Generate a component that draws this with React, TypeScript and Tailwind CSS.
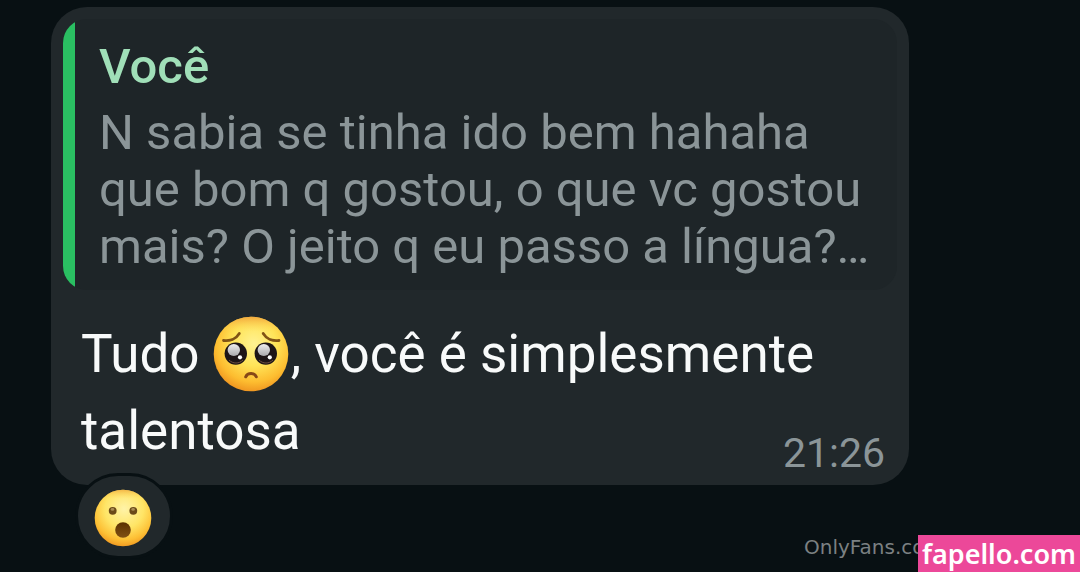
import React from 'react';

const QUOTE = {
  author: 'Você',
  text: 'N sabia se tinha ido bem hahaha que bom q gostou, o que vc gostou mais? O jeito q eu passo a língua?…',
};

const PleadingFace: React.FC = () => (
  <svg viewBox="0 0 80 80" role="img" aria-label="Rosto implorando" className="inline-block w-20 h-20 -mt-3 -mb-1 -ml-0.5 align-middle">
    <defs>
      <radialGradient id="plead-skin" cx="54%" cy="36%" r="66%">
        <stop offset="0" stopColor="#fff292" />
        <stop offset="0.45" stopColor="#ffe458" />
        <stop offset="0.78" stopColor="#fdbd30" />
        <stop offset="1" stopColor="#ee921f" />
      </radialGradient>
      <linearGradient id="plead-top" x1="0" y1="0" x2="0" y2="1">
        <stop offset="0" stopColor="#f0a03c" stopOpacity="0.85" />
        <stop offset="0.2" stopColor="#ffd55a" stopOpacity="0" />
      </linearGradient>
      <linearGradient id="plead-shine" x1="0" y1="0" x2="0" y2="1">
        <stop offset="0" stopColor="#eeeeee" />
        <stop offset="1" stopColor="#aaa9ad" />
      </linearGradient>
    </defs>
    <circle cx="40" cy="40" r="37.3" fill="url(#plead-skin)" />
    <circle cx="40" cy="40" r="37.3" fill="url(#plead-top)" />
    <path d="M12.5 26.5c6 .8 12.5-1.5 15.8-7" fill="none" stroke="#805315" strokeWidth="2.8" strokeLinecap="round" />
    <path d="M68 26.5c-6 .8-12.5-1.5-15.8-7" fill="none" stroke="#805315" strokeWidth="2.8" strokeLinecap="round" />
    <circle cx="24.8" cy="39.6" r="11.2" fill="#1d1517" />
    <circle cx="54.8" cy="39.6" r="11.2" fill="#1d1517" />
    <ellipse cx="22.8" cy="36" rx="6.2" ry="5.9" fill="url(#plead-shine)" />
    <ellipse cx="52.8" cy="36" rx="6.2" ry="5.9" fill="url(#plead-shine)" />
    <circle cx="29" cy="43.3" r="2.1" fill="#fff" />
    <circle cx="58.8" cy="43.3" r="2.1" fill="#fff" />
    <path d="M18 46c4 4 10 4 14 0M48 46c4 4 10 4 14 0" fill="none" stroke="#705044" strokeWidth="1" />
    <path d="M34.7 62.8c2-4.4 8.8-4.4 10.6 0" fill="none" stroke="#874817" strokeWidth="3" strokeLinecap="round" />
  </svg>
);

const SurprisedFace: React.FC = () => (
  <svg viewBox="0 0 60 60" className="w-[60px] h-[60px]" aria-hidden="true">
    <defs>
      <radialGradient id="wow-skin" cx="52%" cy="34%" r="68%">
        <stop offset="0" stopColor="#fff3a8" />
        <stop offset="0.5" stopColor="#ffe566" />
        <stop offset="0.8" stopColor="#fdc035" />
        <stop offset="1" stopColor="#f0961f" />
      </radialGradient>
      <linearGradient id="wow-top" x1="0" y1="0" x2="0" y2="1">
        <stop offset="0" stopColor="#eda23c" stopOpacity="0.7" />
        <stop offset="0.16" stopColor="#ffd55a" stopOpacity="0" />
      </linearGradient>
      <linearGradient id="wow-mouth" x1="0" y1="0" x2="0" y2="1">
        <stop offset="0" stopColor="#5c3100" />
        <stop offset="1" stopColor="#805014" />
      </linearGradient>
    </defs>
    <circle cx="30" cy="30" r="28.3" fill="url(#wow-skin)" />
    <circle cx="30" cy="30" r="28.3" fill="url(#wow-top)" />
    <circle cx="19.7" cy="22.8" r="3.9" fill="#6b4a18" />
    <circle cx="40.3" cy="22.8" r="3.9" fill="#6b4a18" />
    <ellipse cx="19.5" cy="21.4" rx="1.8" ry="1.4" fill="#a98c55" />
    <ellipse cx="40.1" cy="21.4" rx="1.8" ry="1.4" fill="#a98c55" />
    <circle cx="30" cy="42" r="7.8" fill="url(#wow-mouth)" />
  </svg>
);

const App: React.FC = () => {
  return (
    <main className="relative min-h-screen bg-[#081013] pt-[7px] pl-[51px] pr-[171px] font-[Roboto,sans-serif]">
      <article className="rounded-[36px] bg-[#21282b] px-3 pt-3 pb-[15px]">
        {/* Quoted message */}
        <blockquote className="flex overflow-hidden rounded-3xl bg-[#1e2528]">
          <span className="w-3 shrink-0 bg-[#2abf62]" />
          <div className="min-w-0 pt-[19px] pb-[15px] pl-6 pr-5">
            <p className="text-[49px] leading-[57px] font-medium text-[#a0dfb8]">{QUOTE.author}</p>
            <p className="mt-[9px] text-[49px] leading-[57px] text-[#8b9598]">{QUOTE.text}</p>
          </div>
        </blockquote>

        {/* Reply, with the time floated into its last line */}
        <p className="mt-[26px] pl-[18px] pr-3 text-[53px] leading-[77px] text-[#f8fafa]">
          Tudo <PleadingFace />, você é simplesmente talentosa
          <time className="float-right mt-9 text-[41px] leading-[48px] text-[#8b9598]">21:26</time>
        </p>
      </article>

      {/* Reaction */}
      <button
        type="button"
        aria-label="Reação: surpreso"
        className="relative -mt-3 ml-6 flex h-[86px] w-[98px] items-center justify-center rounded-[43px] border-[3px] border-[#081013] bg-[#21282b] pt-1 pr-0.5"
      >
        <SurprisedFace />
      </button>

      <footer className="absolute right-0 bottom-0 flex items-end">
        <span className="-mr-[26px] pb-[13px] font-['DejaVu_Sans',sans-serif] text-[20px] leading-6 text-[#7b8082]">OnlyFans.com</span>
        <span className="relative bg-[#ec4899] px-1 font-['Noto_Sans',sans-serif] text-[27px] leading-[37px] font-semibold text-white">fapello.com</span>
      </footer>
    </main>
  );
};

export default App;
